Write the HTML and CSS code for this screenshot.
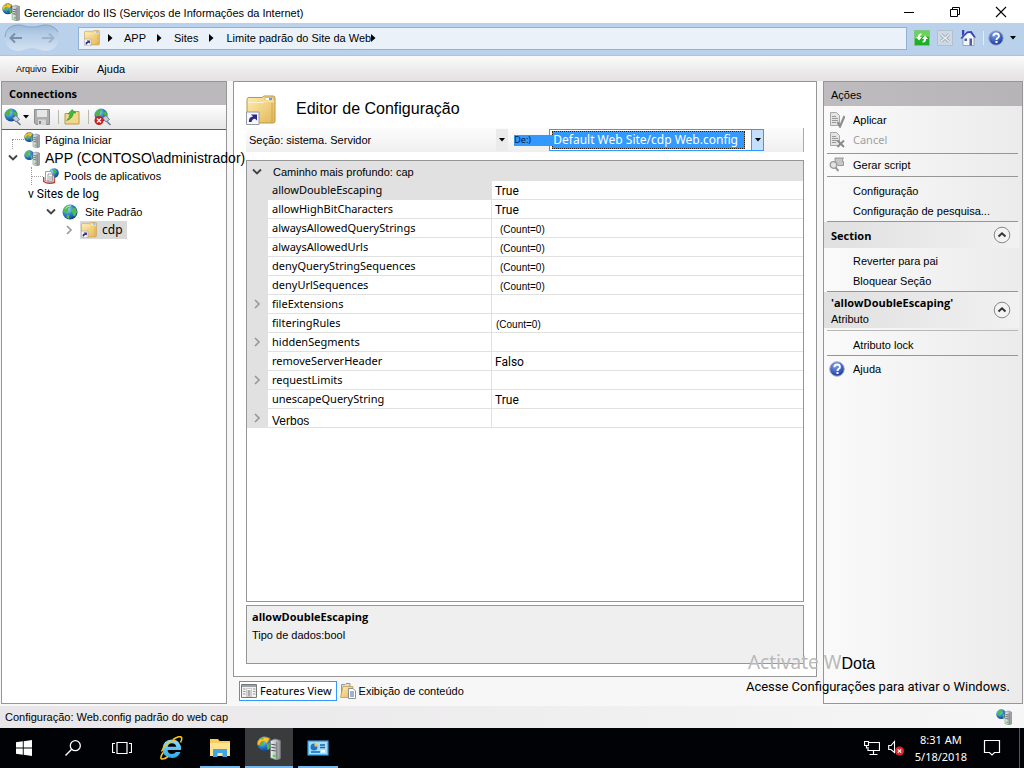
FILE: index.html
```
<!DOCTYPE html>
<html lang="pt">
<head>
<meta charset="utf-8">
<title>Gerenciador do IIS</title>
<link rel="stylesheet" href="styles.css">
</head>
<body>
<svg class="defs" aria-hidden="true">
  <defs>
    <linearGradient id="gFolder" x1="0" y1="0" x2="1" y2="1"><stop offset="0" stop-color="#ffeeb4"/><stop offset="1" stop-color="#e3b655"/></linearGradient>
    <radialGradient id="gGlobe" cx=".35" cy=".3" r=".8"><stop offset="0" stop-color="#a8dcff"/><stop offset=".5" stop-color="#2c7fd0"/><stop offset="1" stop-color="#0a3278"/></radialGradient>
    <linearGradient id="gServer" x1="0" x2="1"><stop offset="0" stop-color="#f2f2f2"/><stop offset="1" stop-color="#8f9499"/></linearGradient>
    <radialGradient id="gHelp" cx=".4" cy=".25" r=".8"><stop offset="0" stop-color="#7fa0ee"/><stop offset="1" stop-color="#14349c"/></radialGradient>
    <linearGradient id="gIe" x1="0" y1="0" x2="0" y2="1"><stop offset="0" stop-color="#8fe0ff"/><stop offset="1" stop-color="#2da9e8"/></linearGradient>
    <linearGradient id="gPill" x1="0" y1="0" x2="0" y2="1"><stop offset="0" stop-color="#9db9d8"/><stop offset=".35" stop-color="#b4cce6"/><stop offset="1" stop-color="#d3e2f2"/></linearGradient>
  </defs>
  <symbol id="globe" viewBox="0 0 16 16">
    <circle cx="8" cy="8" r="7.500" fill="url(#gGlobe)"/>
    <path d="M2.500 3.700C4.500 1.200 8 .6 9 1.500L8 3.500 6 4.500 6.500 7 4.500 9 1.500 8ZM10.500 4.500l3-.5 1.500 4-2 4.500-2-1-.5-2.500-1.500-2ZM5 10.500l2.500 1L7 15 4.500 13.500Z" fill="#4fc044"/>
    <path d="M3.500 4.500Q6 1.500 9 2" stroke="#e8fbff" stroke-width="1" fill="none" opacity=".8"/>
  </symbol>
  <symbol id="server" viewBox="0 0 16 16">
    <circle cx="5.200" cy="5.200" r="4.900" fill="url(#gGlobe)"/>
    <path d="M1.500 3Q3.500.3 6.500.6L6 2.500 4.500 4 4.500 6.500 2.500 7ZM6.500 5.500l2-1v4l-1.500 1Z" fill="#4ebc45"/>
    <path d="M9 3.200 12 2 15.500 3v12l-2.500 1-4-1.500Z" fill="url(#gServer)" stroke="#7d8186" stroke-width=".6"/>
    <path d="M13.200 4.200v11.500" stroke="#70757a" stroke-width=".7"/>
    <path d="M9.500 5.500 12.500 6M9.500 7.500 12.500 8M9.500 9.500 12.500 10" stroke="#555b62" stroke-width=".8"/>
    <path d="M10.500 12.500h2v1.500h-2z" fill="#4be02c"/>
  </symbol>
  <symbol id="iis" viewBox="0 0 16 16">
    <use href="#server"/>
    <path d="M.5 6C0 2.800 2 1.500 4.200 2.200L3.800.6 8.500 1.500 6.500 5 5.500 3.800C3 3 2 4 1.800 6Z" fill="#ffc52e" stroke="#c98c10" stroke-width=".4"/>
  </symbol>
  <symbol id="folder" viewBox="0 0 30 30">
    <path d="M3 2.500h13l2-1.500h9q2 0 2 2v23q0 2-2 2H3q-2 0-2-2V4.500q0-2 2-2Z" fill="url(#gFolder)" stroke="#bb9546"/>
    <path d="M19 2.500h8v3h-8z" fill="#fff" stroke="#c9a85d" stroke-width=".7"/><path d="M23 3h3v2h-3z" fill="#55a1ea"/>
    <path d="M2 7.500h15l2-1.500h9" stroke="#fff3c7" fill="none"/>
    <path d="M26 8v19" stroke="#d2a64c"/>
    <path d="M.5 17h12.500v12.500H.5z" fill="#f7f7fb" stroke="#989aa5"/>
    <path d="M3 27q-.5-5 4-5.500L5 19.500h6v6L9 23.800Q6 24 5.500 27Z" fill="#2b2a86"/>
  </symbol>
  <symbol id="help" viewBox="0 0 16 16">
    <circle cx="8" cy="8" r="7.300" fill="url(#gHelp)" stroke="#a9b3c8"/>
    <path d="M5.400 6.200Q5.500 3.500 8.200 3.500T10.900 6Q10.900 7.300 9.500 8 8.500 8.600 8.500 9.900" fill="none" stroke="#fff" stroke-width="1.900"/><path d="M7.500 11h2v2h-2z" fill="#fff"/>
  </symbol>
  <symbol id="down" viewBox="0 0 6 4"><path d="M0 0h6L3 3.500Z" fill="#000"/></symbol>
  <symbol id="crumb" viewBox="0 0 5 8"><path d="M0 0 4.500 4 0 8Z" fill="#000"/></symbol>
  <symbol id="chevd" viewBox="0 0 10 10"><path d="M1 2.500 5 6.500 9 2.500" stroke="#444" stroke-width="1.900" fill="none"/></symbol>
  <symbol id="chevr" viewBox="0 0 10 10"><path d="M3 1 7 5 3 9" stroke="#999" stroke-width="1.700" fill="none"/></symbol>
  <symbol id="connect" viewBox="0 0 18 18">
    <circle cx="7" cy="7" r="6.500" fill="url(#gGlobe)"/><path d="M1.500 4.500Q4 .5 8 1L6.500 3.500 6 7 3 9ZM9 4l3.500-.5.500 4-2 1.500Z" fill="#49b840"/>
    <path d="M13 13.500l3.500 3.500" stroke="#65788d" stroke-width="1.500"/><path d="M8.500 10l3.500-2.500 3.500 4-3.500 2.500Z" fill="#c4ced8" stroke="#65788d" stroke-width=".9"/>
  </symbol>
  <symbol id="doc" viewBox="0 0 16 16"><path d="M1.500.500h6l3 3v10h-9Z" fill="#e4e4e4" stroke="#a8a8a8"/><path d="M3 4.500h4M3 6.500h6M3 8.500h6M3 10.500h4" stroke="#989898"/></symbol>
  <symbol id="up" viewBox="0 0 18 18"><circle cx="9" cy="9" r="7.800" fill="#f3f3f3" stroke="#888"/><path d="M5.500 10.500 9 7.300l3.500 3.200" stroke="#333" stroke-width="2" fill="none"/></symbol>
</svg>

<header class="titlebar">
  <svg class="i18"><use href="#iis"/></svg>
  <h1>Gerenciador do IIS (Serviços de Informações da Internet)</h1>
  <div class="winbtns">
    <button aria-label="Minimizar"><svg class="i12" viewBox="0 0 12 12"><path d="M1 6.500h10" stroke="#000"/></svg></button>
    <button aria-label="Restaurar"><svg class="i12" viewBox="0 0 12 12"><path d="M1.500 3.500h7v7h-7ZM3.500 3.500v-2h7v7h-2" stroke="#000" fill="none"/></svg></button>
    <button aria-label="Fechar"><svg class="i12" viewBox="0 0 12 12"><path d="M1 1l10 10M11 1 1 11" stroke="#000" stroke-width="1.100"/></svg></button>
  </div>
</header>

<nav class="address">
  <button class="backfwd" aria-label="Voltar e avançar"><svg viewBox="0 0 56 28"><path d="M14 1C20 1 21 3 28 3S36 1 42 1Q55 2 55 13 54 26 42 27C36 27 34 24 28 24S20 27 14 27Q1 26 1 13 2 2 14 1Z" fill="url(#gPill)"/><path d="M1 13Q2 1 14 1C20 1 21 3 28 3S36 1 42 1Q50 1 54 8" fill="none" stroke="#86a5c9"/><path d="M18 14H7M11 9.500 6.500 14l4.500 4.500" stroke="#7890aa" stroke-width="2" fill="none"/><path d="M38 14h11M45 9.500 49.500 14 45 18.500" stroke="#9db3cc" stroke-width="2" fill="none"/></svg></button>
  <div class="path">
    <svg class="i16"><use href="#folder"/></svg>
    <svg class="cr"><use href="#crumb"/></svg><a href="#">APP</a>
    <svg class="cr"><use href="#crumb"/></svg><a href="#">Sites</a>
    <svg class="cr"><use href="#crumb"/></svg><a href="#" class="last">Limite padrão do Site da Web<svg class="cr"><use href="#crumb"/></svg></a>
  </div>
  <div class="tools">
    <button aria-label="Atualizar"><svg class="i16" viewBox="0 0 16 16"><path d="M.5.500h15v15H.5z" fill="#1fae27" stroke="#7fc781"/><path d="M1 1h14v6Q7 5 1 9Z" fill="#69d35c"/><path d="M7.500 3.500Q4 3 4 7H2l3 3.500L8 7H6Q6 5 7.500 5ZM8.500 12.500Q12 13 12 9H14L11 5.500 8 9H10Q10 11 8.500 11Z" fill="#fff"/></svg></button>
    <button aria-label="Parar"><svg class="i16" viewBox="0 0 16 16"><path d="M.5.500h15v15H.5z" fill="#d0d9e3" stroke="#b2bfcd"/><path d="M4 4.500l8 7M12 4.500l-8 7" stroke="#9eabb9" stroke-width="3"/><path d="M4 4.500l8 7M12 4.500l-8 7" stroke="#e9eef4" stroke-width="1.500"/></svg></button>
    <button aria-label="Início"><svg class="i16" viewBox="0 0 16 16"><path d="M3 7 7 3.500 10 2l4 5v8.500H3Z" fill="#f5f6fa" stroke="#8490a6" stroke-width=".7"/><path d="M2 0h2.200v4L2 6ZM.3 8.200 7 1.500 11.500 1 16 7.500H14L10.500 3 7.500 3 2 8.800Z" fill="#3444b4"/><path d="M4.500 8.500h2.500V11H4.500ZM9.500 8.500H12v7H9.500z" fill="#516099"/></svg></button>
    <span class="bar"></span>
    <button class="helpbtn" aria-label="Ajuda"><svg class="i16"><use href="#help"/></svg><svg class="dn"><use href="#down"/></svg></button>
  </div>
</nav>

<nav class="menu"><button class="small">Arquivo</button><button>Exibir</button><button class="aj">Ajuda</button></nav>

<main class="main">
  <aside class="conn">
    <h2 class="phead">Connections</h2>
    <div class="cbar">
      <button aria-label="Conectar"><svg class="i18"><use href="#connect"/></svg><svg class="dn"><use href="#down"/></svg></button>
      <button aria-label="Salvar"><svg class="i16" viewBox="0 0 16 16"><path d="M.5.500h15v15H2L.5 14Z" fill="#adadad" stroke="#8d8d8d"/><path d="M3 1h10v7H3z" fill="#e6e6e6"/><path d="M4 10.500h8V16H4z" fill="#d6d6d6"/><path d="M5 12h2v3H5z" fill="#888"/></svg></button>
      <span class="bar"></span>
      <button aria-label="Subir"><svg class="i16" viewBox="0 0 16 16"><path d="M1 4.500h7l1-2h6v12.500H1Z" fill="#f3d78a" stroke="#b89a50"/><path d="M2.500 11.500Q5.500 9 6 5H4L8 .5 12 4H9.500Q8.500 10 2.500 11.500Z" fill="#41b935" stroke="#278e20" stroke-width=".5"/></svg></button>
      <span class="bar"></span>
      <button aria-label="Desconectar"><svg class="i18" viewBox="0 0 18 18"><use href="#connect"/><circle cx="5" cy="12.500" r="4.500" fill="#c81e1e"/><path d="M3 10.500l4 4M7 10.500l-4 4" stroke="#fff" stroke-width="1.400"/></svg></button>
    </div>
    <ul class="tree">
      <li><div class="node"><span class="tw corner"></span><svg class="i16"><use href="#iis"/></svg><a href="#">Página Iniciar</a></div></li>
      <li><div class="node"><span class="tw chev"><svg class="ch"><use href="#chevd"/></svg></span><svg class="i16"><use href="#server"/></svg><a href="#" class="big">APP (CONTOSO\administrador)</a></div>
        <ul>
          <li><div class="node"><span class="tw tee"></span><svg class="i16" viewBox="0 0 16 16"><circle cx="11" cy="5" r="4.800" fill="url(#gGlobe)"/><path d="M9 1q3 0 5 3l-3 2Z" fill="#49b840"/><path d="M.7 9v4.500Q5 16.500 11.500 14.500V9" fill="none" stroke="#c83736" stroke-width="1.400"/><path d="M2.500 3.500h5l2 2v7.500h-7ZM5 6h4l2 2v6H5Z" fill="#fff" stroke="#888" stroke-width=".8"/><path d="M6 9h3.500M6 11h3.500" stroke="#999"/></svg><a href="#">Pools de aplicativos</a></div></li>
          <li><div class="node sites"><a href="#">v Sites de log</a></div>
            <ul>
              <li><div class="node"><span class="tw chev"><svg class="ch"><use href="#chevd"/></svg></span><svg class="i16"><use href="#globe"/></svg><a href="#" class="pad">Site Padrão</a></div>
                <ul><li><div class="node"><span class="tw chev"><svg class="ch"><use href="#chevr"/></svg></span><span class="sel"><svg class="i16"><use href="#folder"/></svg><a href="#" class="cdp">cdp</a></span></div></li></ul>
              </li>
            </ul>
          </li>
        </ul>
      </li>
    </ul>
  </aside>

  <section class="center">
    <div class="editor">
      <div class="ehead"><svg class="i30"><use href="#folder"/></svg><h2>Editor de Configuração</h2></div>
      <div class="ebar">
        <label for="sec">Seção:</label>
        <span class="combo plain"><select id="sec"><option>sistema. Servidor</option></select><span class="arrow"><svg class="dn"><use href="#down"/></svg></span></span>
        <label class="from" for="from">De:)</label>
        <span class="combo active"><select id="from"><option>Default Web Site/cdp Web.config</option></select><span class="arrow"><svg class="dn"><use href="#down"/></svg></span></span>
      </div>
      <div class="gridbox">
        <table class="props">
          <colgroup><col class="c1"><col class="c2"><col></colgroup>
          <thead><tr><th><svg class="ch"><use href="#chevd"/></svg></th><th colspan="2">Caminho mais profundo: cap</th></tr></thead>
          <tbody>
            <tr class="cur"><td></td><td>allowDoubleEscaping</td><td>True</td></tr>
            <tr><td></td><td>allowHighBitCharacters</td><td>True</td></tr>
            <tr><td></td><td>alwaysAllowedQueryStrings</td><td class="cnt">(Count=0)</td></tr>
            <tr><td></td><td>alwaysAllowedUrls</td><td class="cnt">(Count=0)</td></tr>
            <tr><td></td><td>denyQueryStringSequences</td><td class="cnt">(Count=0)</td></tr>
            <tr><td></td><td>denyUrlSequences</td><td class="cnt">(Count=0)</td></tr>
            <tr><td><svg class="ch"><use href="#chevr"/></svg></td><td>fileExtensions</td><td></td></tr>
            <tr><td></td><td>filteringRules</td><td class="cnt near">(Count=0)</td></tr>
            <tr><td><svg class="ch"><use href="#chevr"/></svg></td><td>hiddenSegments</td><td></td></tr>
            <tr><td></td><td>removeServerHeader</td><td>Falso</td></tr>
            <tr><td><svg class="ch"><use href="#chevr"/></svg></td><td>requestLimits</td><td></td></tr>
            <tr><td></td><td>unescapeQueryString</td><td>True</td></tr>
            <tr><td><svg class="ch"><use href="#chevr"/></svg></td><td class="verbs">Verbos</td><td></td></tr>
          </tbody>
        </table>
      </div>
      <div class="desc"><h3>allowDoubleEscaping</h3><p>Tipo de dados:bool</p></div>
    </div>
    <div class="tabs">
      <button class="on"><svg class="i16" viewBox="0 0 16 16"><path d="M.5 1.500h15v13H.5Z" fill="#f2f2f2" stroke="#777"/><path d="M1 2h14v2H1z" fill="#9aa2ac"/><path d="M2 6h2.500M2 8.500h2.500M2 11h2.500M12 6h2.500M12 8.500h2.500M12 11h2.500" stroke="#999"/><path d="M5.500 5.500h5v8h-5z" fill="#fff" stroke="#aaa" stroke-width=".6"/><path d="M6.500 8h3M6.500 10h3M6.500 12h3" stroke="#555"/></svg>Features View</button>
      <button class="off"><svg class="i16" viewBox="0 0 16 16"><path d="M1.500 3V1.500H5l1-1h4V12.500H1.500Z" fill="#ddd" stroke="#999"/><path d="M.5 14.500 3 3.500h10l-1 11Z" fill="url(#gFolder)" stroke="#b4954c" stroke-width=".7"/><path d="M8.500 5.500h4.500l2.500 2.500v7.500h-7Z" fill="#fff" stroke="#777" stroke-width=".8"/><path d="M10 9h4M10 11h4M10 13h4" stroke="#3b64ac"/></svg>Exibição de conteúdo</button>
    </div>
  </section>

  <aside class="actions">
    <h2 class="ahead">Ações</h2>
    <div class="grp g1">
      <button><svg class="i16" viewBox="0 0 16 16"><use href="#doc"/><path d="M8.500 10l2.500 4.500L15.500 4" stroke="#8e8e8e" stroke-width="2.200" fill="none"/></svg>Aplicar</button>
      <button class="dis" disabled><svg class="i16" viewBox="0 0 16 16"><use href="#doc"/><path d="M8.500 8.500l6.500 6.500M15 8.500 8.500 15" stroke="#8c8c8c" stroke-width="2"/></svg>Cancel</button>
    </div>
    <div class="grp g2"><button><svg class="i16" viewBox="0 0 16 16"><path d="M6 1h8.500q-1.500 1.500-1 3.500h1v4H9L6 5Z" fill="#c6c6c6" stroke="#888" stroke-width=".8"/><circle cx="4.500" cy="8" r="3.300" fill="#e2e2e2" stroke="#999" stroke-width="1.300"/><path d="M6.500 10.500 9.500 14" stroke="#999" stroke-width="2"/></svg>Gerar script</button></div>
    <div class="grp g3"><button>Configuração</button><button>Configuração de pesquisa...</button></div>
    <div class="shead"><h3>Section</h3><button aria-label="Recolher"><svg class="i18"><use href="#up"/></svg></button></div>
    <div class="grp g4"><button>Reverter para pai</button><button>Bloquear Seção</button></div>
    <div class="shead tall"><div><h3>'allowDoubleEscaping'</h3><p>Atributo</p></div><button aria-label="Recolher"><svg class="i18"><use href="#up"/></svg></button></div>
    <div class="grp g5"><button>Atributo lock</button></div>
    <div class="g6"><button><svg class="i16"><use href="#help"/></svg>Ajuda</button></div>
  </aside>

  <div class="watermark"><p class="wm1"><span>Activate W</span>Dota</p><p class="wm2">Acesse Configurações para ativar o Windows.</p></div>
</main>

<footer class="status"><span>Configuração: Web.config padrão do web cap</span><svg class="i16"><use href="#server"/></svg></footer>

<div class="taskbar">
  <div class="apps">
    <button aria-label="Iniciar"><svg class="i16" viewBox="0 0 16 16"><path d="M0 2.300 6.800 1.300V7.500H0ZM7.700 1.200 16 0v7.500H7.700ZM0 8.500h6.800v6.200L0 13.700ZM7.700 8.500H16V16l-8.300-1.200Z" fill="#fff"/></svg></button>
    <button aria-label="Pesquisar"><svg class="i16" viewBox="0 0 16 16"><circle cx="10.300" cy="5.700" r="5" fill="none" stroke="#fff" stroke-width="1.300"/><path d="M6.700 9.300.5 15.500" stroke="#fff" stroke-width="1.400"/></svg></button>
    <button aria-label="Visão de tarefas"><svg class="i20" viewBox="0 0 20 20"><path d="M5 4.500h10v11H5ZM3 5.500H.5v9H3M17 5.500h2.500v9H17" stroke="#fff" fill="none" stroke-width="1.200"/></svg></button>
    <button aria-label="Internet Explorer"><svg class="i24" viewBox="0 0 24 24"><path d="M22 14H8.500Q9 18 13 18q2.500 0 4-2h4.500Q19 22 13 22 3.500 21.500 3.500 12.800 4 4 13 3.500 22.500 4 22 14ZM8.700 10.700h8.600Q16.500 7.300 13 7.300T8.700 10.700Z" fill="url(#gIe)" fill-rule="evenodd"/><path d="M4 16.500Q0 23 3.500 23 6 22.800 9 20.500M14 3.500Q21-1 22.500 1.500 23.300 3 21.500 6.500" fill="none" stroke="#f6c31d" stroke-width="1.600"/><path d="M2.500 15.500Q6 7 16 4" fill="none" stroke="#f6c31d" stroke-width="1.400"/></svg></button>
    <button class="run" aria-label="Explorador"><svg class="i22" viewBox="0 0 22 22"><path d="M1 2h8l1.500 2H21v15H1Z" fill="#f5cf5e"/><path d="M1 6h20v13H1Z" fill="#ffe38f"/><path d="M4 12h14v8h-4.500v-4h-5v4H4Z" fill="#42a5e2"/></svg></button>
    <button class="run now" aria-label="Gerenciador do IIS"><svg class="i24"><use href="#iis"/></svg></button>
    <button class="run" aria-label="Painel"><svg class="i22" viewBox="0 0 22 22"><path d="M.5 3.500h21v15H.5z" fill="#4cb5f1"/><path d="M2 5h18v12H2z" fill="#a6ddff"/><circle cx="7" cy="10" r="3.500" fill="#1976c8"/><path d="M7.500 9.500V6A3.500 3.500 0 0 1 11 9.500Z" fill="#ffc243"/><path d="M13 8h5M13 10.500h5M4 15h9" stroke="#1668b2" stroke-width="1.500"/><path d="M14 13h4v2.500h-4z" fill="#fff"/></svg></button>
  </div>
  <div class="tray">
    <svg class="i16" viewBox="0 0 16 16"><path d="M5 2.500h10.500v8H4V7M9.500 10.500v4M5.500 14.500h8M.5 1.500h4v4h-4ZM2.500 5.500v3" stroke="#fff" fill="none" stroke-width="1.200"/></svg>
    <svg class="i16" viewBox="0 0 16 16"><path d="M.7 5.500H3L6.500 1.500v11L3 9.500H.7Z" stroke="#fff" fill="none" stroke-width="1.100"/><circle cx="11.500" cy="11" r="4.500" fill="#e0262d"/><path d="M9.800 9.300l3.400 3.400M13.200 9.300l-3.400 3.400" stroke="#fff" stroke-width="1.200"/></svg>
    <div class="clock"><div>8:31 AM</div><div>5/18/2018</div></div>
    <svg class="i18" viewBox="0 0 18 18"><path d="M1.500 1.500h15v12h-5L9 16l-2.500-2.500h-5Z" stroke="#fff" fill="none" stroke-width="1.200"/></svg>
    <span class="peek"></span>
  </div>
</div>
</body>
</html>
```
FILE: styles.css
```
* { box-sizing: border-box; margin: 0; padding: 0; }
body { min-height: 100vh; display: flex; flex-direction: column; background: #f7f7f7; color: #000; font: 11px/18px "Liberation Sans", sans-serif; }
button, select { font: inherit; color: inherit; background: none; border: 0; display: flex; align-items: center; }
a { color: inherit; text-decoration: none; }
ul { list-style: none; }
svg { flex: none; display: block; }
h1, h2, h3 { font-size: inherit; font-weight: normal; }
.defs { position: absolute; width: 0; height: 0; }
.i12 { width: 12px; height: 12px; }
.i16 { width: 16px; height: 16px; }
.i18 { width: 18px; height: 18px; }
.i20 { width: 20px; height: 20px; }
.i22 { width: 22px; height: 22px; }
.i24 { width: 24px; height: 24px; }
.i30 { width: 30px; height: 30px; }
.dn { width: 6px; height: 4px; }
.cr { width: 5px; height: 8px; }
.ch { width: 10px; height: 10px; }
.bar { width: 1px; height: 14px; background: #b9b9a8; }

.titlebar { height: 23px; display: flex; align-items: center; gap: 4px; padding-left: 2px; background: #fff; }
.titlebar h1 { padding-top: 3px; }
.winbtns { margin-left: auto; display: flex; }
.winbtns button { width: 46px; height: 21px; justify-content: center; }

.address { height: 33px; display: flex; align-items: center; padding: 0 8px 2px 4px; background: #b9d1ea; border-bottom: 1px solid #a9c4e0; }
.backfwd { width: 56px; height: 28px; margin-right: 18px; }
.path { flex: 1; height: 23px; display: flex; align-items: center; padding-left: 5px; background: #eaf1f9; border: 1px solid #93b1d2; }
.path > .cr { margin: 0 12px 0 11px; }
.path > .i16 + .cr { margin: 0 11px 0 8px; }
.last { display: flex; align-items: center; }
.tools { display: flex; align-items: center; gap: 7px; padding-left: 7px; }
.tools .bar { background: #e4edf7; }
.tools .helpbtn { gap: 6px; margin-left: -3px; }

.menu { height: 25px; display: flex; align-items: center; padding-left: 16px; gap: 5px; background: linear-gradient(#fbfbfb, #e3e1e2); }
.menu .small { font-size: 9px; }
.menu .aj { margin-left: 13px; }

.main { flex: 1; position: relative; display: grid; grid-template-columns: 226px minmax(0, 1fr) 200px; gap: 6px; padding: 0 1px 2px; }
.conn { background: #fff; border: 1px solid #969696; position: relative; z-index: 1; }
.phead { height: 23px; padding-left: 7px; background: #bbb9bb; font: bold 11px/23px "Open Sans", sans-serif; }
.cbar { height: 25px; display: flex; align-items: center; gap: 5px; padding-left: 2px; background: linear-gradient(#fdfdfd, #e6e6e6); border-bottom: 1px solid #56588a; }
.cbar button { gap: 1px; }
.cbar .bar { margin-left: 3px; }
.tree { padding: 1px 0 0 6px; }
.tree ul { padding-left: 19px; }
.tree ul ul ul { padding-left: 18px; }
.node { height: 18px; display: flex; align-items: center; white-space: nowrap; }
.node a { padding-left: 5px; }
.node .big { font-size: 14px; }
.tw { flex: none; width: 15px; height: 18px; display: flex; align-items: center; }
.chev { margin-right: 1px; }
.corner, .tee { width: 12px; margin-left: 4px; }
.corner::before, .tee::before { content: ""; width: 12px; height: 9px; align-self: flex-end; border-top: 1px dotted #999; border-left: 1px dotted #999; }
.tee::before { height: 18px; border-top: 0; background: linear-gradient(90deg, #aaa 1px, transparent 1px) 0 9px / 2px 1px repeat-x; }
.node.sites a { padding-left: 1px; font: 12px/18px "Roboto", sans-serif; }
.node .pad { padding-left: 7px; }
.sel { height: 18px; display: flex; align-items: center; padding: 0 4px 0 1px; background: #d9d9d9; }
.sel .cdp { font: 12px/18px "Noto Sans", sans-serif; }

.center { display: flex; flex-direction: column; }
.editor { flex: 1; display: flex; flex-direction: column; padding: 13px 12px 12px; background: #fff; border: 1px solid #969696; }
.ehead { height: 33px; display: flex; gap: 20px; }
.ehead h2 { font-size: 16px; line-height: 28px; }
.ebar { height: 24px; display: flex; align-items: center; padding-left: 3px; margin-bottom: 8px; background: linear-gradient(#fcfcfc, #efefef); border-right: 1px solid #aaa; }
.combo { height: 22px; display: flex; align-items: center; }
.combo select { flex: 1; min-width: 0; appearance: none; outline: 0; }
.plain { width: 225px; padding-left: 3px; }
.arrow { width: 12px; height: 22px; display: flex; align-items: center; justify-content: center; background: #ebebeb; }
.from { height: 11px; width: 40px; margin-left: 6px; margin-right: -5px; background: #39f; color: #06224a; font: 9px/10px "Noto Sans", sans-serif; z-index: 1; }
.active { width: 215px; background: #fff; border: 1px solid #39f; padding-left: 2px; }
.active select { height: 18px; margin-right: 6px; background: #39f; border: 1px dotted #3b2200; color: #fff; font: 12px/16px "Noto Sans", sans-serif; }
.active .arrow { height: 20px; background: #c3dffc; border-left: 1px solid #39f; }

.gridbox { flex: 1; border: 1px solid #969696; margin-bottom: 3px; }
.props { width: 100%; table-layout: fixed; border-collapse: separate; border-spacing: 0; }
.c1 { width: 21px; }
.c2 { width: 224px; }
.props th { height: 20px; padding: 2px 0 0 5px; background: #e1e1e1; text-align: left; font-weight: normal; }
.props td { height: 19px; line-height: 18px; border-bottom: 1px solid #e1e1e1; }
.props td:first-child { background: #e1e1e1; padding-left: 5px; }
.props td:nth-child(2) { padding-left: 4px; border-right: 1px solid #e1e1e1; font-family: "Noto Sans", sans-serif; }
.props .cur td:nth-child(2) { background: #e1e1e1; }
.props td:nth-child(3) { padding: 2px 0 0 3px; font: 12px/16px "Roboto", sans-serif; }
.props td.cnt:nth-child(3) { padding: 4px 0 0 8px; font: 10px/14px "Liberation Sans", sans-serif; }
.props td.near:nth-child(3) { padding-left: 4px; }
.props td.verbs:nth-child(2) { padding-top: 6px; font: 12px/12px "Liberation Sans", sans-serif; }
.desc { height: 59px; padding: 1px 5px; background: #efefef; border: 1px solid #969696; }
.desc h3 { font: bold 11px/19px "Open Sans", sans-serif; }
.desc p { line-height: 19px; }
.tabs { height: 27px; display: flex; align-items: center; gap: 1px; padding-left: 6px; }
.tabs button { height: 20px; gap: 3px; padding: 0 1px; border: 1px solid transparent; }
.tabs .on { padding: 0 4px 0 1px; background: #fff; border-color: #39f; font-family: "Noto Sans", sans-serif; }

.actions { background: linear-gradient(90deg, #fafafa, #ebebeb); border: 1px solid #969696; }
.ahead { height: 24px; padding: 2px 7px 0; line-height: 22px; background: linear-gradient(90deg, #bebcbe, #b6b4b6); }
.grp { margin: 0 4px 0 3px; border-bottom: 1px solid #969696; }
.actions .grp button, .g6 button { height: 20px; gap: 8px; padding-left: 26px; white-space: nowrap; }
.actions .grp button:has(svg), .g6 button:has(svg) { padding-left: 2px; }
.g1 { padding: 4px 0 3px; }
.g2 { padding: 1px 0; }
.g3 { padding: 4px 0 0; }
.g4 { padding: 3px 0 0; }
.g5 { padding: 4px 0 0; border-top: 1px solid #b8b8b8; }
.g6 { padding: 3px; }
.actions .dis { color: #a0a0a0; font-family: "Noto Sans", sans-serif; }
.shead { min-height: 26px; display: flex; align-items: center; justify-content: space-between; padding: 0 8px 0 7px; margin-right: 3px; background: linear-gradient(90deg, #e0e0e0, #f1f1f1); }
.shead h3 { font: bold 11px/17px "Open Sans", sans-serif; }
.shead p { line-height: 16px; }
.tall { height: 36px; margin-bottom: 2px; }

.watermark { position: absolute; right: 14px; bottom: 8px; z-index: 2; }
.wm1 { font-size: 16px; line-height: 24px; padding-left: 2px; }
.wm1 span { color: #b9b9b9; font: 19px/24px "Noto Sans", sans-serif; }
.wm2 { font: 13px/22px "Roboto", sans-serif; }

.status { height: 22px; display: flex; align-items: center; justify-content: space-between; padding: 0 12px 0 5px; background: linear-gradient(90deg, #e8e6e8, #f6f6f6); }
.taskbar { height: 40px; display: flex; justify-content: space-between; background: #010206; color: #fff; }
.apps { display: flex; gap: 1px; }
.apps button { width: 48px; height: 40px; justify-content: center; }
.apps .run { background: linear-gradient(#76b9ed, #76b9ed) center bottom / 40px 2px no-repeat; }
.apps .now { background: linear-gradient(#76b9ed, #76b9ed) center bottom / 48px 2px no-repeat, #3a3b3d; }
.tray { display: flex; align-items: center; gap: 8px; padding-right: 4px; }
.clock { text-align: center; font: 11px/17px "Noto Sans", sans-serif; margin: 0 8px 0 3px; }
.peek { width: 1px; height: 40px; margin-left: 10px; background: #55575b; }
```
